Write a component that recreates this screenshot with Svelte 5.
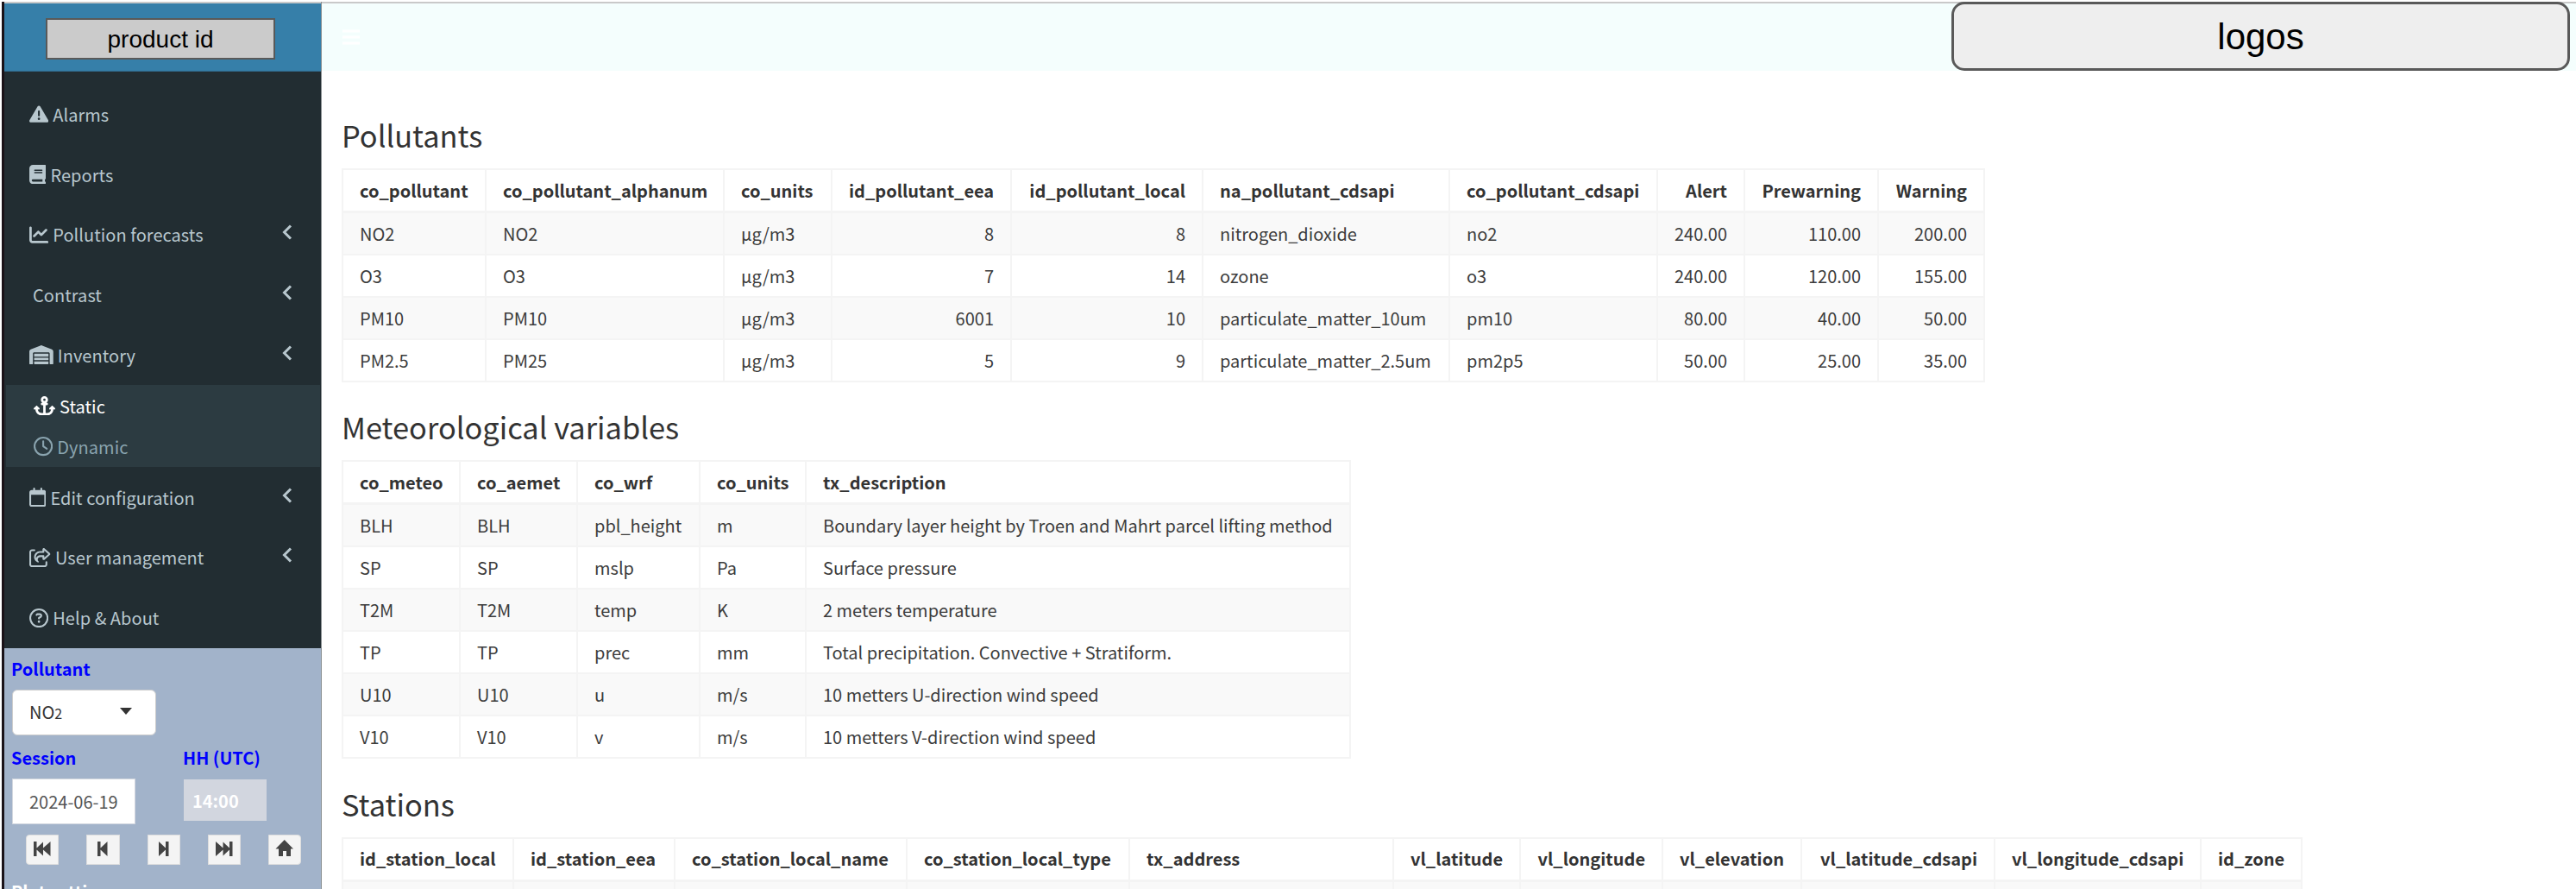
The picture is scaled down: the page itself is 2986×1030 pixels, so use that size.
<script>
  const icons = {
    warning: { w: 512, d: 'M256 32c14.200 0 27.300 7.500 34.500 19.800l216 368c7.300 12.400 7.300 27.700.2 40.100S486.300 480 472 480H40c-14.300 0-27.600-7.700-34.700-20.100s-7-27.800.2-40.100l216-368C228.700 39.500 241.800 32 256 32zm0 128c-13.300 0-24 10.700-24 24V296c0 13.300 10.700 24 24 24s24-10.700 24-24V184c0-13.300-10.700-24-24-24zm32 224a32 32 0 1 0-64 0 32 32 0 1 0 64 0z' },
    book: { w: 448, d: 'M96 0C43 0 0 43 0 96V416c0 53 43 96 96 96H384h32c17.700 0 32-14.300 32-32s-14.300-32-32-32V384c17.700 0 32-14.300 32-32V32c0-17.700-14.300-32-32-32H384 96zm0 384H352v64H96c-17.700 0-32-14.300-32-32s14.300-32 32-32zm32-240c0-8.800 7.200-16 16-16H336c8.800 0 16 7.200 16 16s-7.200 16-16 16H144c-8.800 0-16-7.200-16-16zm16 48H336c8.800 0 16 7.200 16 16s-7.200 16-16 16H144c-8.800 0-16-7.200-16-16s7.200-16 16-16z' },
    chart: { w: 512, d: 'M64 64c0-17.700-14.300-32-32-32S0 46.300 0 64V400c0 44.200 35.800 80 80 80H480c17.700 0 32-14.300 32-32s-14.300-32-32-32H80c-8.800 0-16-7.200-16-16V64zm406.600 86.600c12.500-12.500 12.500-32.800 0-45.300s-32.800-12.500-45.300 0L320 210.700l-57.400-57.400c-12.500-12.500-32.800-12.500-45.300 0l-112 112c-12.500 12.500-12.500 32.800 0 45.300s32.800 12.500 45.300 0L240 221.300l57.400 57.400c12.500 12.500 32.800 12.500 45.300 0l128-128z' },
    warehouse: { w: 640, d: 'M0 488V171.300c0-26.200 15.900-49.700 40.200-59.400L308.100 4.800c7.600-3.100 16.100-3.100 23.800 0L599.800 111.900c24.300 9.700 40.200 33.300 40.200 59.400V488c0 13.300-10.700 24-24 24H568c-13.300 0-24-10.700-24-24V224c0-17.700-14.300-32-32-32H128c-17.700 0-32 14.300-32 32V488c0 13.300-10.700 24-24 24H24c-13.300 0-24-10.700-24-24zm488 24H152c-13.300 0-24-10.700-24-24V432H512v56c0 13.300-10.700 24-24 24zM128 400V336H512v64H128zm0-96V224H512v80H128z' },
    anchor: { w: 576, d: 'M320 96a32 32 0 1 1-64 0 32 32 0 1 1 64 0zm21.100 80C367 158.800 384 129.400 384 96c0-53-43-96-96-96s-96 43-96 96c0 33.400 17 62.800 42.900 80H224c-17.700 0-32 14.300-32 32s14.300 32 32 32h32V448H208c-53 0-96-43-96-96v-6.100l7 7c9.400 9.400 24.600 9.400 33.900 0s9.400-24.600 0-33.900L97 263c-9.400-9.400-24.600-9.400-33.900 0L7 319c-9.400 9.400-9.400 24.600 0 33.900s24.600 9.400 33.900 0l7-7V352c0 88.400 71.600 160 160 160h80 80c88.400 0 160-71.600 160-160v-6.100l7 7c9.400 9.400 24.600 9.400 33.900 0s9.400-24.600 0-33.900l-56-56c-9.400-9.400-24.600-9.400-33.900 0l-56 56c-9.400 9.400-9.400 24.600 0 33.900s24.600 9.400 33.900 0l7-7V352c0 53-43 96-96 96H320V240h32c17.700 0 32-14.300 32-32s-14.300-32-32-32H341.100z' },
    clock: { w: 512, d: 'M464 256A208 208 0 1 1 48 256a208 208 0 1 1 416 0zM0 256a256 256 0 1 0 512 0A256 256 0 1 0 0 256zM232 120V256c0 8 4 15.500 10.700 20l96 64c11 7.400 25.900 4.400 33.300-6.700s4.400-25.900-6.700-33.300L280 243.200V120c0-13.300-10.700-24-24-24s-24 10.700-24 24z' },
    calendar: { w: 448, d: 'M152 24c0-13.300-10.700-24-24-24s-24 10.700-24 24V64H64C28.700 64 0 92.700 0 128v320c0 35.300 28.700 64 64 64H384c35.300 0 64-28.700 64-64V128c0-35.300-28.700-64-64-64H344V24c0-13.300-10.700-24-24-24s-24 10.700-24 24V64H152V24zM48 192H400V448c0 8.800-7.200 16-16 16H64c-8.800 0-16-7.200-16-16V192z' },
    share: { w: 576, d: 'M136 32a24 24 0 0 1 0 48H72c-13.300 0-24 10.700-24 24V440c0 13.300 10.700 24 24 24H408c13.300 0 24-10.700 24-24V376a24 24 0 0 1 48 0v64c0 39.800-32.200 72-72 72H72c-39.800 0-72-32.200-72-72V104C0 64.200 32.200 32 72 32zM352 34.700C352 15.500 367.500 0 386.700 0c8.600 0 16.800 3.200 23.200 8.900L548.100 133.300c7.600 6.800 11.900 16.500 11.900 26.700s-4.300 19.900-11.900 26.700l-139 125.100c-5.900 5.300-13.500 8.200-21.400 8.200H384c-17.700 0-32-14.300-32-32V240H290c-36 0-66 29-66 66 0 22 8 34 20 46 7 7 10 13 10 18 0 9-8 14-17 14-4 0-8-1-12-3-32-17-97-58-97-141 0-88.400 71.600-160 160-160h64zM400 64.600V112c0 8.800-7.200 16-16 16H288c-61.900 0-112 50.100-112 112 0 12 2 22 5.200 31.600C195.600 225.500 238.600 192 289.500 192H384c8.800 0 16 7.200 16 16v47.400L506 160z' },
    help: { w: 512, d: 'M464 256A208 208 0 1 0 48 256a208 208 0 1 0 416 0zM0 256a256 256 0 1 1 512 0A256 256 0 1 1 0 256zm169.800-90.700c7.900-22.300 29.100-37.300 52.800-37.300h58.300c34.900 0 63.100 28.300 63.100 63.100c0 22.600-12.100 43.500-31.700 54.800L280 264.400c-.2 13-10.900 23.600-24 23.600c-13.300 0-24-10.700-24-24V250.500c0-8.600 4.600-16.500 12.100-20.800l44.300-25.400c4.700-2.700 7.600-7.700 7.600-13.100c0-8.400-6.800-15.100-15.100-15.100H222.600c-3.400 0-6.400 2.100-7.500 5.300l-.4 1.200c-4.400 12.500-18.200 19-30.600 14.600s-19-18.200-14.600-30.600l.3-1.300zM224 352a32 32 0 1 1 64 0 32 32 0 1 1-64 0z' }
  };

  const menu = [
    { label: 'Alarms', icon: 'warning' },
    { label: 'Reports', icon: 'book' },
    { label: 'Pollution forecasts', icon: 'chart', more: true },
    { label: 'Contrast', more: true },
    {
      label: 'Inventory', icon: 'warehouse', more: true,
      children: [
        { label: 'Static', icon: 'anchor', active: true },
        { label: 'Dynamic', icon: 'clock' }
      ]
    },
    { label: 'Edit configuration', icon: 'calendar', more: true },
    { label: 'User management', icon: 'share', more: true },
    { label: 'Help & About', icon: 'help' }
  ];

  const steps = [
    'M0 0h3.500v7.500L11 .5v7L19.500 0v17L11 9.500v7L3.500 9.500V17H0z',
    'M4 0h3.500v7.500L15.500 0v17L7.500 9.500V17H4z',
    'M15.500 0H12v7.500L4 0v17l8-7.500V17h3.500z',
    'M19.500 0H16v7.500L8.500 .5v7L0 0v17l8.500-7.500v7L16 9.500V17h3.500z',
    'M9.750-2L20 8.500h-3V17h-5v-6H8v6H3V8.500H-.5z'
  ];

  // Each column: [name, width, right aligned]
  const tables = [
    {
      title: 'Pollutants',
      cols: [
        ['co_pollutant', 166], ['co_pollutant_alphanum', 276], ['co_units', 125],
        ['id_pollutant_eea', 208, true], ['id_pollutant_local', 222, true],
        ['na_pollutant_cdsapi', 286], ['co_pollutant_cdsapi', 241],
        ['Alert', 101, true], ['Prewarning', 155, true], ['Warning', 123, true]
      ],
      rows: [
        ['NO2', 'NO2', 'μg/m3', '8', '8', 'nitrogen_dioxide', 'no2', '240.00', '110.00', '200.00'],
        ['O3', 'O3', 'μg/m3', '7', '14', 'ozone', 'o3', '240.00', '120.00', '155.00'],
        ['PM10', 'PM10', 'μg/m3', '6001', '10', 'particulate_matter_10um', 'pm10', '80.00', '40.00', '50.00'],
        ['PM2.5', 'PM25', 'μg/m3', '5', '9', 'particulate_matter_2.5um', 'pm2p5', '50.00', '25.00', '35.00']
      ]
    },
    {
      title: 'Meteorological variables',
      cols: [['co_meteo', 136], ['co_aemet', 136], ['co_wrf', 142], ['co_units', 123], ['tx_description', 631]],
      rows: [
        ['BLH', 'BLH', 'pbl_height', 'm', 'Boundary layer height by Troen and Mahrt parcel lifting method'],
        ['SP', 'SP', 'mslp', 'Pa', 'Surface pressure'],
        ['T2M', 'T2M', 'temp', 'K', '2 meters temperature'],
        ['TP', 'TP', 'prec', 'mm', 'Total precipitation. Convective + Stratiform.'],
        ['U10', 'U10', 'u', 'm/s', '10 metters U-direction wind speed'],
        ['V10', 'V10', 'v', 'm/s', '10 metters V-direction wind speed']
      ]
    },
    {
      title: 'Stations',
      cols: [
        ['id_station_local', 198], ['id_station_eea', 187], ['co_station_local_name', 269],
        ['co_station_local_type', 258], ['tx_address', 306], ['vl_latitude', 147, true],
        ['vl_longitude', 165, true], ['vl_elevation', 161, true], ['vl_latitude_cdsapi', 224, true],
        ['vl_longitude_cdsapi', 239, true], ['id_zone', 117, true]
      ],
      rows: [['', '', '', '', '', '', '', '', '', '', '']]
    }
  ];
</script>

{#snippet glyph(name)}
  <svg class="glyph" viewBox="0 0 {icons[name].w} 512" width={icons[name].w * 0.0434} height="22.2" aria-hidden="true">
    <path d={icons[name].d} fill-rule="evenodd" />
  </svg>
{/snippet}

<div class="page">
  <aside>
    <div class="brand"><div class="product">product id</div></div>
    <nav>
      {#each menu as item}
        <div class="item">
          {#if item.icon}{@render glyph(item.icon)}{/if}
          <span>{item.label}</span>
          {#if item.more}
            <svg class="chevron" viewBox="0 0 12 18" width="12" height="18" aria-hidden="true"><path d="M10 1.500L2.500 9l7.500 7.500" /></svg>
          {/if}
        </div>
        {#if item.children}
          <div class="submenu">
            {#each item.children as child}
              <div class="subitem" class:active={child.active}>
                {@render glyph(child.icon)}
                <span>{child.label}</span>
              </div>
            {/each}
          </div>
        {/if}
      {/each}
    </nav>
    <div class="panel">
      <div class="caption">Pollutant</div>
      <div class="select"><span>NO<small>2</small></span><i class="caret"></i></div>
      <div class="fields">
        <div class="field">
          <div class="caption">Session</div>
          <div class="date">2024-06-19</div>
        </div>
        <div class="field">
          <div class="caption">HH (UTC)</div>
          <div class="hour">14:00</div>
        </div>
      </div>
      <div class="steps">
        {#each steps as d}
          <button><svg viewBox="-1 -2 22 20" width="22" height="20" aria-hidden="true"><path {d} /></svg></button>
        {/each}
      </div>
      <div class="caption light">Plot settings</div>
    </div>
  </aside>
  <div class="body">
    <header>
      <svg class="burger" viewBox="0 0 20 18" width="20" height="18" aria-hidden="true"><path d="M0 2h20M0 9h20M0 16h20" /></svg>
      <div class="logos">logos</div>
    </header>
    <main>
      {#each tables as t}
        <section>
          <h3>{t.title}</h3>
          <table style="width: {t.cols.reduce((sum, c) => sum + c[1], 2)}px">
            <colgroup>
              {#each t.cols as c, i}<col style="width: {c[1] + (i === 0 ? 2 : 0)}px" />{/each}
            </colgroup>
            <thead>
              <tr>{#each t.cols as c}<th class:num={c[2]}>{c[0]}</th>{/each}</tr>
            </thead>
            <tbody>
              {#each t.rows as row}
                <tr>{#each row as cell, i}<td class:num={t.cols[i][2]}>{cell}</td>{/each}</tr>
              {/each}
            </tbody>
          </table>
        </section>
      {/each}
    </main>
  </div>
</div>

<style>
  :global(body) { background: #fff; overflow: hidden; }
  .page {
    box-sizing: border-box;
    display: flex;
    height: 1030px;
    width: 2986px;
    padding: 2px 0 0 2px;
    overflow: hidden;
    font: 20px/32px "Noto Sans CJK SC", "Open Sans", sans-serif;
    color: #333;
  }
  aside {
    box-sizing: border-box;
    flex: none;
    width: 371px;
    display: flex;
    flex-direction: column;
    border-left: 3px solid #1a1218;
    border-right: 1px solid #8b9194;
    background: #222d32;
  }
  .brand {
    box-sizing: border-box;
    flex: none;
    height: 81px;
    border-top: 2px solid #c9c9c9;
    border-bottom: 1px solid #31688a;
    padding: 17px 0 0 48px;
    background: #367fa9;
  }
  .product {
    box-sizing: border-box;
    width: 266px;
    height: 48px;
    border: 2px solid #595959;
    background: #cbcbcb;
    color: #000;
    font: 28px/45px "Liberation Sans", Arial, sans-serif;
    text-align: center;
  }
  nav { flex: none; height: 667.500px; box-sizing: border-box; padding-top: 14.500px; color: #b8c7ce; }
  .item, .subitem { display: flex; align-items: center; gap: 5px; }
  .item { height: 69.750px; padding: 0 33px 0 29px; }
  .item span, .subitem span { padding-top: 1px; white-space: nowrap; letter-spacing: 0.050px; }
  .item span:first-child { padding-left: 4px; }
  .glyph { flex: none; fill: currentColor; }
  .chevron { margin: 0 0 5px auto; fill: none; stroke: currentColor; stroke-width: 3px; }
  .submenu { box-sizing: border-box; height: 95px; margin: 0 1px 0 2px; background: #2c3b41; color: #8aa4af; }
  .subitem { height: 47.500px; padding-left: 32px; }
  .subitem.active { color: #fff; }
  .panel { flex: 1; padding: 8px 23px 0 9px; background: #a2b3ca; }
  .caption { margin-left: -1px; font-weight: 700; color: #00f; height: 40px; line-height: 32px; white-space: nowrap; }
  .light { color: #fff; margin-top: 15px; }
  .select {
    box-sizing: border-box;
    display: flex;
    align-items: center;
    justify-content: space-between;
    width: 167px;
    height: 53px;
    padding: 0 27px 0 19px;
    border: 1px solid #ccc;
    border-radius: 6px;
    background: #fff;
  }
  .select span { padding-top: 1px; }
  .select small { font-size: 16px; }
  .caret { border: 7.500px solid transparent; border-top: 8px solid #333; border-bottom: 0; margin-bottom: 2px; }
  .fields { display: flex; margin-top: 10px; }
  .field { flex: none; width: 199px; }
  .field:last-child { width: 100px; }
  .date, .hour { box-sizing: border-box; border: 1px solid #d2d6de; }
  .date { width: 143px; height: 53px; padding-left: 19px; line-height: 52px; background: #fff; color: #555; }
  .hour { width: 96px; height: 48px; margin-top: 1px; padding-left: 9px; line-height: 47px; background: #d2d6df; color: #fff; font-weight: 700; }
  .steps { display: flex; gap: 32px; padding: 12px 0 0 16px; }
  .steps button {
    box-sizing: border-box;
    flex: none;
    display: grid;
    place-items: center;
    width: 38.250px;
    height: 35px;
    padding: 0 0 3px;
    border: 1px solid #ddd;
    background: #f4f4f4;
  }
  .steps button:first-child { border-radius: 4px 0 0 4px; }
  .steps button:last-child { border-radius: 0 4px 4px 0; }
  .steps path { fill: #444; }
  .body { flex: 1; min-width: 0; }
  header {
    box-sizing: border-box;
    display: flex;
    justify-content: space-between;
    height: 80px;
    padding-right: 7px;
    border-top: 2px solid #c9c9c9;
    background: #f4fefd;
  }
  .burger { margin: 30px 0 0 24px; stroke: #fff; stroke-width: 3px; }
  .logos {
    box-sizing: border-box;
    width: 717px;
    height: 80px;
    margin-top: -2px;
    border: 3px solid #595959;
    border-radius: 15px;
    background: #eee;
    color: #000;
    font: 42px/76px "Liberation Sans", Arial, sans-serif;
    text-align: center;
  }
  main { padding: 51px 0 0 23px; }
  h3 { height: 50px; margin: 0; padding-bottom: 12px; font-size: 34.400px; line-height: 46px; font-weight: 400; }
  table { table-layout: fixed; border-collapse: separate; border-spacing: 0; border-top: 2px solid #f4f4f4; background: #fff; }
  th, td {
    box-sizing: border-box;
    height: 49px;
    padding: 0 19px;
    border-right: 2px solid #f4f4f4;
    border-bottom: 2px solid #f4f4f4;
    text-align: left;
    white-space: nowrap;
    line-height: 32px;
  }
  td { color: #3c3c3c; }
  th { height: 50px; border-bottom-width: 3px; }
  th:first-child, td:first-child { border-left: 2px solid #f4f4f4; }
  .num { text-align: right; }
  tbody tr:nth-child(odd) { background: #f9f9f9; }
  section { margin-bottom: 28.300px; }
</style>
